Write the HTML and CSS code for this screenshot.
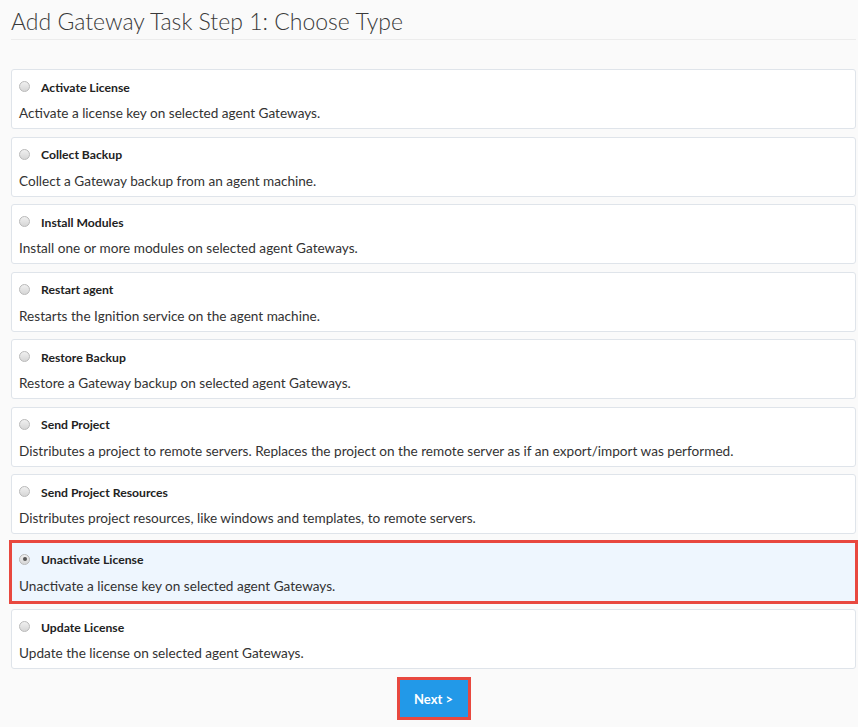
FILE: index.html
```html
<!DOCTYPE html>
<html>
<head>
<meta charset="utf-8">
<link rel="stylesheet" href="styles.css">
</head>
<body>
<div class="page">
  <h1 class="title">Add Gateway Task Step 1: Choose Type</h1>
  <div class="list">
    <label class="card"><div class="head"><span class="radio"></span><span class="name">Activate License</span></div><div class="desc">Activate a license key on selected agent Gateways.</div></label>
    <label class="card"><div class="head"><span class="radio"></span><span class="name">Collect Backup</span></div><div class="desc">Collect a Gateway backup from an agent machine.</div></label>
    <label class="card"><div class="head"><span class="radio"></span><span class="name">Install Modules</span></div><div class="desc">Install one or more modules on selected agent Gateways.</div></label>
    <label class="card"><div class="head"><span class="radio"></span><span class="name">Restart agent</span></div><div class="desc">Restarts the Ignition service on the agent machine.</div></label>
    <label class="card"><div class="head"><span class="radio"></span><span class="name">Restore Backup</span></div><div class="desc">Restore a Gateway backup on selected agent Gateways.</div></label>
    <label class="card"><div class="head"><span class="radio"></span><span class="name">Send Project</span></div><div class="desc">Distributes a project to remote servers. Replaces the project on the remote server as if an export/import was performed.</div></label>
    <label class="card"><div class="head"><span class="radio"></span><span class="name">Send Project Resources</span></div><div class="desc">Distributes project resources, like windows and templates, to remote servers.</div></label>
    <label class="card selected"><div class="head"><span class="radio checked"></span><span class="name">Unactivate License</span></div><div class="desc">Unactivate a license key on selected agent Gateways.</div></label>
    <label class="card"><div class="head"><span class="radio"></span><span class="name">Update License</span></div><div class="desc">Update the license on selected agent Gateways.</div></label>
  </div>
  <div class="actions"><button class="next">Next &gt;</button></div>
</div>
</body>
</html>
```

FILE: styles.css
```css
html, body { margin: 0; padding: 0; background: #fafafa; }
body { font-family: "Source Sans Pro", Lato, "Noto Sans", sans-serif; color: #333; }
.page { width: 845px; margin-left: 11px; }
.title {
  margin: 0;
  padding-top: 6px;
  font-weight: 300;
  font-size: 23px;
  line-height: 30px;
  color: #3a3a3a;
  border-bottom: 1px solid #ececec;
  height: 40px;
  box-sizing: border-box;
}
.list { margin-top: 29px; display: flex; flex-direction: column; gap: 7.5px; }
.card {
  display: block;
  background: #fff;
  border: 1px solid #dfe4ea;
  border-radius: 3px;
  padding: 8px 8px 5px 7px;
  height: 60px;
  box-sizing: border-box;
}
.card.selected {
  background: #eef6fe;
  border-radius: 0;
  outline: 3px solid #e8483f;
  outline-offset: -1px;
}
.head { display: flex; align-items: center; height: 18px; }
.radio {
  width: 11px; height: 11px; border-radius: 50%;
  box-sizing: border-box;
  border: 1px solid #b9b9b9;
  background: linear-gradient(#f0f0f0, #d6d6d6);
  margin-right: 11px;
  margin-top: -1px;
  position: relative;
}
.radio.checked::after {
  content: ""; position: absolute; left: 2.5px; top: 2.5px;
  width: 4px; height: 4px; border-radius: 50%; background: #555;
}
.name { font-weight: 700; font-size: 12.2px; color: #222; }
.desc { margin-top: 7px; font-size: 13.6px; line-height: 20px; color: #333; }
.actions { display: flex; justify-content: center; margin-top: 8px; }
.next {
  width: 74px; height: 43px;
  background: #2299e8;
  color: #fff;
  font-family: inherit;
  font-weight: 700;
  font-size: 13px;
  border: 3px solid #e8483f;
  padding: 0;
  cursor: pointer;
}
```
